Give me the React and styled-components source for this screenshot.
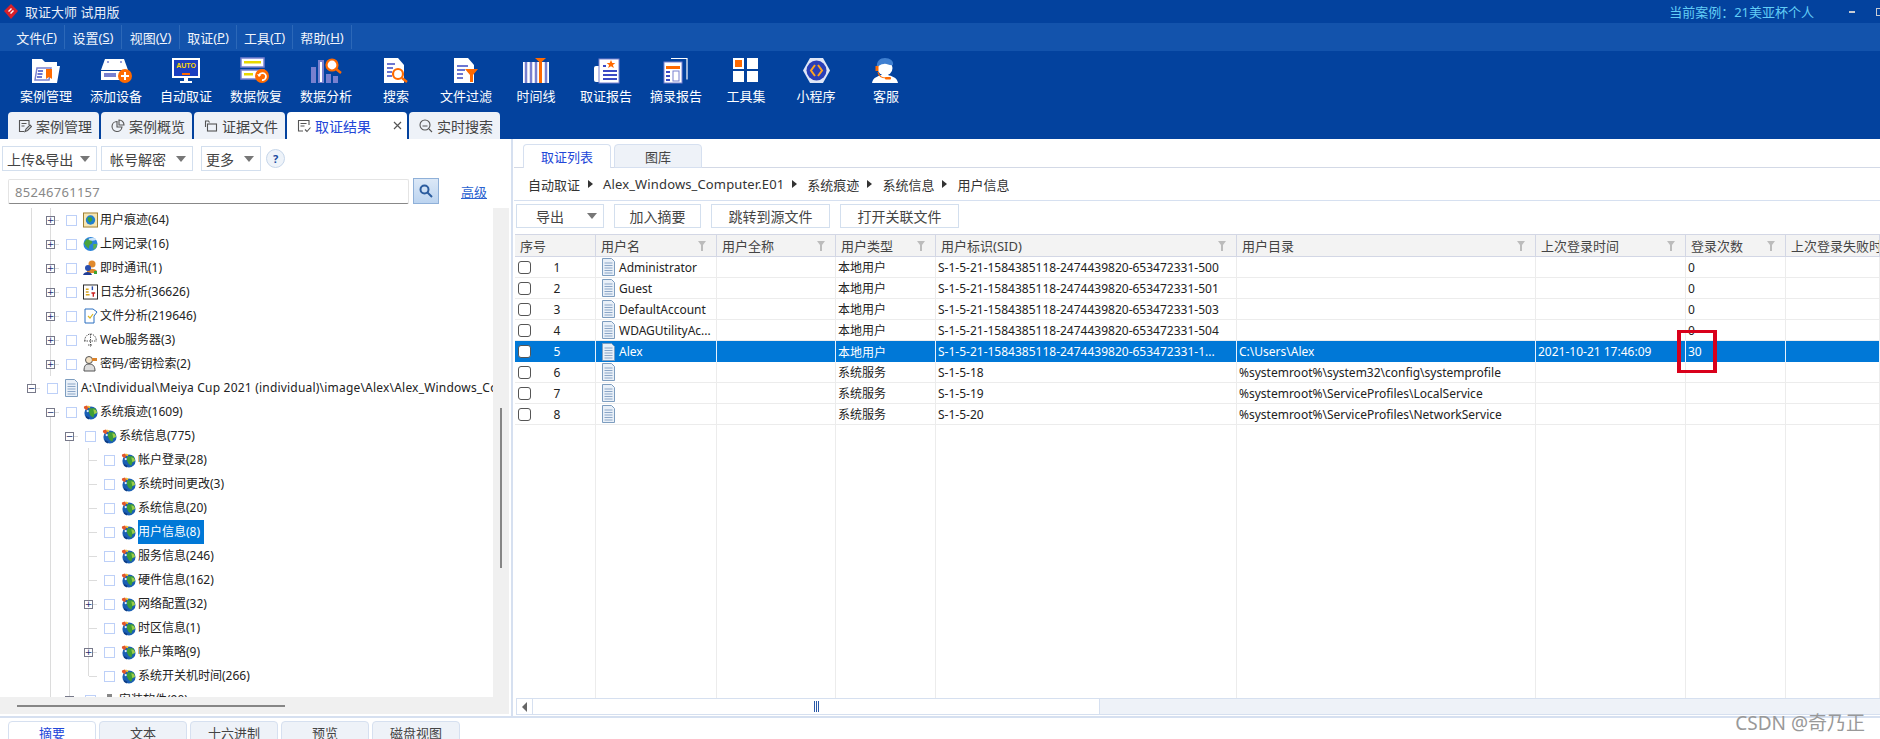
import styled, { createGlobalStyle } from 'styled-components';

const GlobalStyle = createGlobalStyle`
  html, body {
    margin: 0;
    padding: 0;
    background: #fff;
  }
  * {
    box-sizing: border-box;
  }
  body {
    font-family: "Noto Sans", "Noto Sans CJK SC", sans-serif;
    font-size: 12px;
    color: #222;
  }
`;

const COLUMNS = '81px 121px 119px 100px 301px 299px 150px 100px 94px';

const Page = styled.div`
  display: flex;
  flex-direction: column;
  width: 1880px;
  height: 739px;
  overflow: hidden;
  position: relative;
`;

const TitleBar = styled.div`
  display: flex;
  flex: none;
  align-items: center;
  height: 23px;
  background: #03429e;
  padding-left: 4px;
  color: #e8eef8;
  font-size: 13px;
`;

const AppTitle = styled.span`
  margin-left: 7px;
  flex: 1;
`;

const CaseName = styled.span`
  color: #62cdf6;
  font-size: 13px;
  margin-right: 35px;
`;

const WinMin = styled.span`
  width: 6px;
  height: 2px;
  background: #c9ccd3;
  margin-right: 21px;
`;

const WinMax = styled.span`
  width: 6px;
  height: 8px;
  border: 1px solid #c9ccd3;
  margin-right: -2px;
`;

const MenuBar = styled.div`
  display: flex;
  flex: none;
  height: 28px;
  padding-left: 9px;
  background: #1353ac;
`;

const MenuItem = styled.div`
  display: flex;
  align-items: center;
  justify-content: center;
  width: ${(props) => props.$width}px;
  margin: 2px 0;
  border-right: 1px solid #2c68b8;
  color: #f0f4fb;
  font-size: 13px;
`;

const Ribbon = styled.div`
  height: 88px;
  flex: none;
  background: #03429e;
  display: flex;
  flex-direction: column;
`;

const ToolRow = styled.div`
  display: flex;
  height: 61px;
  padding: 5px 0 0 11px;
`;

const ToolItem = styled.div`
  width: 70px;
  display: flex;
  flex-direction: column;
  align-items: center;
  color: #fff;
  font-size: 13px;
  white-space: nowrap;
`;

const ToolIconBox = styled.div`
  height: 28px;
  display: flex;
  align-items: center;
  margin-bottom: 2px;
`;

const TabStrip = styled.div`
  display: flex;
  gap: 2px;
  height: 27px;
  padding-left: 8px;
`;

const TopTab = styled.div`
  display: flex;
  align-items: center;
  width: ${(props) => props.$width}px;
  padding-left: 10px;
  gap: 4px;
  border-radius: 4px 4px 0 0;
  background: ${(props) => (props.$active ? '#fff' : '#eef2f8')};
  color: ${(props) => (props.$active ? '#2246d8' : '#444')};
  font-size: 14px;
  white-space: nowrap;
`;

const TabClose = styled.span`
  margin-left: 18px;
  display: flex;
`;

const Main = styled.div`
  display: flex;
  flex: none;
  height: 577px;
`;

const LeftPanel = styled.div`
  width: 511px;
  display: flex;
  flex-direction: column;
`;

const LeftTools = styled.div`
  display: flex;
  align-items: center;
  height: 37px;
  padding: 7px 0 5px 2px;
`;

const DropButton = styled.div`
  display: flex;
  align-items: center;
  justify-content: space-between;
  width: ${(props) => props.$width}px;
  height: 25px;
  margin-right: ${(props) => props.$gap || 4}px;
  padding: 0 ${(props) => props.$pad || 6}px 0 ${(props) => props.$padLeft || 4}px;
  border: 1px solid #d3dfee;
  color: #444;
  font-size: 14px;
  white-space: nowrap;
`;

const Caret = styled.span`
  width: 0;
  height: 0;
  border-left: 5px solid transparent;
  border-right: 5px solid transparent;
  border-top: 6px solid #777;
`;

const HelpButton = styled.div`
  width: 19px;
  height: 19px;
  margin-left: 1px;
  border: 1px solid #c6d6ea;
  border-radius: 50%;
  background: #eef3f9;
  color: #1b4aa0;
  font-size: 11px;
  font-weight: 700;
  display: flex;
  align-items: center;
  justify-content: center;
`;

const SearchRow = styled.div`
  display: flex;
  align-items: flex-start;
  height: 32px;
  padding: 2px 0 0 8px;
`;

const SearchInput = styled.div`
  width: 401px;
  height: 25px;
  margin-top: 1px;
  padding-left: 6px;
  display: flex;
  align-items: center;
  border: 1px solid #e4e4e4;
  border-bottom: 1px solid #888;
  border-radius: 2px;
  color: #888;
  font-size: 13px;
  letter-spacing: 0.3px;
`;

const SearchButton = styled.div`
  width: 26px;
  height: 26px;
  margin-left: 4px;
  border: 1px solid #8fb0d8;
  background: linear-gradient(#dbe8f7, #bcd4f0);
  display: flex;
  align-items: center;
  justify-content: center;
`;

const AdvancedLink = styled.a`
  margin: 4px 0 0 22px;
  color: #2a62d0;
  font-size: 13px;
  text-decoration: underline;
`;

const TreeArea = styled.div`
  display: flex;
  height: 489px;
`;

const TreeView = styled.div`
  width: 493px;
  overflow: hidden;
`;

const VGutter = styled.div`
  width: 16px;
  background: #f0f0f0;
  padding: 200px 0 0 7px;
`;

const VThumb = styled.div`
  width: 2px;
  height: 160px;
  background: #868686;
`;

const HGutter = styled.div`
  width: 509px;
  height: 17px;
  background: #f0f0f0;
  padding: 8px 0 0 17px;
`;

const HThumb = styled.div`
  width: 268px;
  height: 2px;
  background: #868686;
`;

const TreeRow = styled.div`
  display: flex;
  align-items: center;
  height: 24px;
  padding-left: 22px;
  white-space: nowrap;
`;

const lineColor = '#dcdcdc';
const lineLayers = ({ $line, $tick }) => {
  const layers = [];
  const g = `linear-gradient(${lineColor}, ${lineColor})`;
  if ($line === 'full') layers.push(`${g} 9px 0 / 1px 100% no-repeat`);
  if ($line === 'up') layers.push(`${g} 9px 0 / 1px 50% no-repeat`);
  if ($line === 'down') layers.push(`${g} 9px 12px / 1px 50% no-repeat`);
  if ($tick) layers.push(`${g} 10px 12px / 8px 1px no-repeat`);
  return layers.length ? layers.join(', ') : 'none';
};

const TreeCell = styled.div`
  width: 19px;
  height: 24px;
  flex: none;
  display: flex;
  align-items: center;
  padding-left: 5px;
  background: ${lineLayers};
`;

const Expander = styled.div`
  width: 9px;
  height: 9px;
  border: 1px solid #77798a;
  background: #fff;
  display: flex;
  align-items: center;
  justify-content: center;
  color: #1d2f70;
  font-size: 9px;
  line-height: 1;
  font-family: "DejaVu Sans", sans-serif;
  margin-top: 1px;
`;

const TreeCheck = styled.span`
  width: 11px;
  height: 11px;
  flex: none;
  margin: 0 6px;
  border: 1px solid #bdd0f8;
`;

const TreeIcon = styled.span`
  width: 15px;
  height: 18px;
  flex: none;
  display: flex;
  align-items: center;
  justify-content: center;
  margin-right: 2px;
`;

const TreeLabel = styled.span`
  height: 24px;
  line-height: 23px;
  font-size: 12px;
  padding-right: 4px;
  letter-spacing: ${(props) => (props.$wide ? '0.2px' : '0')};
  ${(props) => props.$selected && 'background: #0078d7; color: #fff;'}
`;

const Splitter = styled.div`
  width: 2px;
  margin-right: 1px;
  background: #d6e0f0;
`;

const RightPanel = styled.div`
  flex: 1;
  min-width: 0;
  display: flex;
  flex-direction: column;
`;

const SubTabs = styled.div`
  display: flex;
  gap: 3px;
  height: 29px;
  padding: 5px 0 0 9px;
  border-bottom: 1px solid #d3d9e6;
`;

const SubTab = styled.div`
  width: 88px;
  height: 24px;
  display: flex;
  align-items: center;
  justify-content: center;
  font-size: 13px;
  border: 1px solid #d6e0f0;
  border-radius: 4px 4px 0 0;
  ${(props) => (props.$active
    ? 'border-bottom: none; background: #fff; color: #2246d8;'
    : 'background: #eef2f8; color: #444;')}
`;

const Breadcrumb = styled.div`
  display: flex;
  align-items: center;
  gap: 8px;
  height: 33px;
  padding-left: 14px;
  border-bottom: 1px solid #d6e0f0;
  font-size: 13px;
  color: #333;
`;

const CrumbFile = styled.span`
  letter-spacing: 0.14px;
`;

const CrumbArrow = styled.span`
  width: 0;
  height: 0;
  border-top: 4px solid transparent;
  border-bottom: 4px solid transparent;
  border-left: 5px solid #333;
  margin-right: 2px;
`;

const Actions = styled.div`
  display: flex;
  height: 33px;
  padding: 3px 0 0 2px;
  gap: 10px;
`;

const ActionButton = styled.div`
  display: flex;
  align-items: center;
  justify-content: center;
  width: ${(props) => props.$width}px;
  height: 24px;
  border: 1px solid #d3dfee;
  color: #444;
  font-size: 14px;
  white-space: nowrap;
`;

const ExportButton = styled(ActionButton)`
  justify-content: space-between;
  padding: 0 6px 0 19px;
`;

const Table = styled.div`
  position: relative;
  height: 464px;
  margin-left: 1px;
  display: flex;
  flex-direction: column;
  overflow: hidden;
`;

const HeaderRow = styled.div`
  display: grid;
  grid-template-columns: ${COLUMNS};
  height: 23px;
  flex: none;
  background: #f3f3f3;
  border-top: 1px solid #d3d7e5;
  border-bottom: 1px solid #d3d7e5;
`;

const HeaderCell = styled.div`
  display: flex;
  align-items: center;
  justify-content: space-between;
  padding: 0 10px 0 5px;
  border-right: 1px solid #d3d7e5;
  color: #444;
  font-size: 13px;
  white-space: nowrap;
  overflow: hidden;
`;

const Row = styled.div`
  display: grid;
  grid-template-columns: ${COLUMNS};
  height: 21px;
  flex: none;
  border-bottom: ${(props) => (props.$selected ? 'none' : '1px solid #ececec')};
  background: ${(props) => (props.$selected ? '#0078d7' : '#fff')};
  color: ${(props) => (props.$selected ? '#fff' : '#222')};
`;

const Filler = styled.div`
  display: grid;
  grid-template-columns: ${COLUMNS};
  flex: 1;
`;

const Cell = styled.div`
  display: flex;
  align-items: center;
  padding-left: 2px;
  border-right: 1px solid ${(props) => (props.$selected ? '#e6f1fb' : '#ececec')};
  font-size: 12px;
  white-space: nowrap;
  overflow: hidden;
`;

const EmptyCell = styled.div`
  border-right: 1px solid #ececec;
`;

const RowCheck = styled.span`
  width: 13px;
  height: 13px;
  flex: none;
  margin-left: 1px;
  border: 1px solid #555;
  border-radius: 3px;
  background: #fff;
`;

const RowNumber = styled.span`
  width: 52px;
  text-align: center;
`;

const NameCell = styled(Cell)`
  padding-left: 6px;
  gap: 4px;
`;

const Highlight = styled.div`
  position: absolute;
  left: 1162px;
  top: 96px;
  width: 40px;
  height: 43px;
  border: 3px solid #d9001b;
  border-left-width: 4px;
  border-right-width: 4px;
`;

const HScroll = styled.div`
  display: flex;
  height: 17px;
  margin-left: 2px;
  border-top: 1px solid #d6e0f0;
  border-bottom: 1px solid #d6e0f0;
`;

const ScrollLeft = styled.div`
  width: 17px;
  border-left: 1px solid #d6e0f0;
  border-right: 1px solid #d6e0f0;
  display: flex;
  align-items: center;
  padding-left: 5px;
`;

const ScrollThumb = styled.div`
  width: 567px;
  border-right: 1px solid #d6e0f0;
  display: flex;
  align-items: center;
  justify-content: center;
  gap: 1px;
`;

const Grip = styled.span`
  width: 1px;
  height: 11px;
  background: #2a5aa8;
`;

const ScrollTrack = styled.div`
  flex: 1;
  background: #eef2f8;
`;

const BottomBar = styled.div`
  flex: none;
  height: 23px;
  overflow: hidden;
  border-top: 2px solid #d6e0f0;
  display: flex;
  gap: 3px;
  padding: 3px 0 0 8px;
`;

const BottomTab = styled.div`
  width: 88px;
  height: 22px;
  display: flex;
  justify-content: center;
  padding-top: 1px;
  border: 1px solid #d6e0f0;
  border-radius: 4px 4px 0 0;
  font-size: 13px;
  background: ${(props) => (props.$active ? '#fff' : '#eef2f8')};
  color: ${(props) => (props.$active ? '#2246d8' : '#444')};
`;

const Watermark = styled.div`
  position: absolute;
  right: 15px;
  bottom: 5px;
  color: #999;
  font-size: 19px;
  line-height: 1.1;
`;

/* ribbon icons */
const BLUE = '#7880cf';
const ORANGE = '#ff6a00';

const Svg = ({ w = 32, h = 27, children }) => (
  <svg width={w} height={h} viewBox={`0 0 ${w} ${h}`}>{children}</svg>
);

const IconCase = () => (
  <Svg>
    <path d="M2 2h10l3 3h12v4h3l-3 17H2z" fill="#fff" />
    <path d="M7 11h14l-2 12H5z" fill="#fff" stroke={BLUE} strokeWidth="1.5" />
    <path d="M8 14h5M7.500 17h5M7 20h5" stroke="#3b49c4" strokeWidth="1.6" />
    <path d="M16 12h6v10l-3-2-3 2z" fill={ORANGE} />
  </Svg>
);

const IconDevice = () => (
  <Svg>
    <path d="M5 2h19l4 11H1z" fill="#fff" />
    <circle cx="8" cy="5" r="1" fill={BLUE} />
    <circle cx="21" cy="5" r="1" fill={BLUE} />
    <rect x="1" y="14" width="25" height="9" fill="#fff" />
    <rect x="4" y="16" width="12" height="4" fill={BLUE} />
    <circle cx="25" cy="19" r="7" fill={ORANGE} />
    <path d="M21 19h8M25 15v8" stroke="#fff" strokeWidth="2" />
  </Svg>
);

const IconAuto = () => (
  <Svg w={30}>
    <rect x="1" y="1" width="28" height="20" fill="#fff" />
    <rect x="3" y="3" width="24" height="16" fill="#1b3fc0" />
    <text x="15" y="11" textAnchor="middle" fontSize="7" fontWeight="700" fill="#ffd800" fontFamily="Liberation Sans">AUTO</text>
    <rect x="11" y="16" width="8" height="2" fill={ORANGE} />
    <path d="M13 21h4v3h4v2H9v-2h4z" fill="#fff" />
  </Svg>
);

const IconRestore = () => (
  <Svg>
    <rect x="1" y="1" width="23" height="9" fill="#fff" stroke={BLUE} strokeWidth="1.5" />
    <rect x="4" y="4" width="17" height="2.5" fill="#e8d800" />
    <rect x="1" y="13" width="23" height="9" fill="#fff" stroke={BLUE} strokeWidth="1.5" />
    <rect x="4" y="16" width="9" height="2.5" fill="#e8d800" />
    <circle cx="22" cy="19" r="7" fill={ORANGE} />
    <path d="M19 19a3.500 3.500 0 1 1 3 4" fill="none" stroke="#fff" strokeWidth="1.8" />
    <path d="M17 17l2 3 2-2z" fill="#fff" />
  </Svg>
);

const IconAnalyse = () => (
  <Svg>
    <rect x="1" y="10" width="5" height="16" fill={BLUE} />
    <rect x="8" y="3" width="6" height="23" fill={BLUE} />
    <rect x="10" y="5" width="2" height="20" fill="#fff" />
    <rect x="16" y="17" width="5" height="9" fill={BLUE} />
    <rect x="23" y="19" width="5" height="7" fill={BLUE} />
    <circle cx="22" cy="8" r="5.500" fill="#fff" stroke={ORANGE} strokeWidth="2.2" />
    <path d="M26 12l5 4" stroke={ORANGE} strokeWidth="2.4" />
  </Svg>
);

const IconSearchDoc = () => (
  <Svg w={26}>
    <path d="M1 1h14l6 7v18H1z" fill="#fff" />
    <path d="M4 7h8M4 11h6M4 15h5M4 19h5" stroke="#3b49c4" strokeWidth="1.6" />
    <circle cx="15" cy="17" r="5" fill="#fff" stroke={ORANGE} strokeWidth="2.2" />
    <path d="M19 21l5 4" stroke={ORANGE} strokeWidth="2.4" />
  </Svg>
);

const IconFilterDoc = () => (
  <Svg w={26}>
    <path d="M1 1h14l6 7v18H1z" fill="#fff" />
    <path d="M4 9h11M4 13h8M4 17h6M4 21h6" stroke="#3b49c4" strokeWidth="1.6" />
    <path d="M12 12h13l-5 6v7h-3v-7z" fill={ORANGE} />
  </Svg>
);

const IconTimeline = () => (
  <Svg w={28}>
    <rect x="1" y="5" width="26" height="21" fill="#fff" />
    <path d="M4 5v21M9 5v21M14 5v21M24 5v21" stroke={BLUE} strokeWidth="2.5" />
    <rect x="17" y="5" width="3" height="21" fill={ORANGE} />
    <path d="M13 1h11l-5.500 5z" fill={ORANGE} />
  </Svg>
);

const IconReport = () => (
  <Svg w={27}>
    <rect x="1" y="9" width="8" height="16" rx="2" fill="#fff" />
    <rect x="6" y="2" width="20" height="24" fill="#fff" stroke={BLUE} />
    <path d="M18 3l1.300 3h3l-2.400 2 1 3-2.900-1.800-2.900 1.800 1-3-2.400-2h3z" fill={ORANGE} />
    <path d="M10 9h3M10 14h14M10 18h14M10 22h14" stroke="#3b49c4" strokeWidth="1.8" />
  </Svg>
);

const IconExcerpt = () => (
  <Svg w={27}>
    <path d="M8 1.500h16v21" fill="none" stroke="#fff" strokeWidth="1.200" />
    <rect x="1" y="5" width="18" height="21" fill="#fff" stroke={BLUE} />
    <rect x="3" y="9" width="14" height="3" fill={ORANGE} />
    <path d="M3 15h4M3 19h4M3 23h4" stroke="#3b49c4" strokeWidth="1.800" />
    <rect x="10" y="14" width="6" height="10" fill="#fff" stroke={BLUE} />
  </Svg>
);

const IconTools = () => (
  <Svg w={28} h={26}>
    <rect x="1" y="1" width="11" height="11" fill="#fff" />
    <rect x="3" y="3" width="7" height="7" fill={ORANGE} />
    <rect x="15" y="1" width="11" height="11" fill="#fff" />
    <rect x="1" y="14" width="11" height="11" fill="#fff" />
    <rect x="15" y="14" width="11" height="11" fill="#fff" />
  </Svg>
);

const IconApplet = () => (
  <Svg w={29}>
    <path d="M8 1h13l7 12.500-7 12.500H8L1 13.500z" fill="#dfe6f7" />
    <circle cx="14.500" cy="13.500" r="10" fill="#2a3fb8" />
    <path d="M13 8l-4 5.500 4 5.500M16 8l4 5.500-4 5.500" fill="none" stroke="#ffa51e" strokeWidth="2" />
  </Svg>
);

const IconService = () => (
  <Svg>
    <path d="M2 26c1-6 7-7 9-8h7c3 1 9 2 10 8z" fill="#fff" />
    <circle cx="15" cy="11" r="7.500" fill="#fff" />
    <path d="M7 11c-1-7 3-10 8-10s9 3 8 7c-3 1-7-2-9-1-3 0-6 2-7 4z" fill="#3f7fd0" />
    <path d="M7 9v5" stroke={ORANGE} strokeWidth="3" />
    <path d="M8 15c1 5 4 6 8 6" fill="none" stroke={ORANGE} strokeWidth="1.200" />
    <rect x="15" y="20" width="6" height="2.500" rx="1" fill={ORANGE} />
  </Svg>
);

/* small line icons for the tabs */
const TabSvg = ({ children }) => (
  <svg width="14" height="14" viewBox="0 0 14 14" fill="none" stroke="#555" strokeWidth="1.100">{children}</svg>
);

const TabCase = () => (
  <TabSvg>
    <path d="M11 6V1.500H1.500v11H6M3.500 4.500h5M3.500 7h3" />
    <path d="M7 12.500l1-2.500 4-4 1.500 1.500-4 4z" />
  </TabSvg>
);

const TabPie = () => (
  <TabSvg>
    <path d="M6 2.500a5 5 0 1 0 5 5.500H6z" />
    <path d="M8 1a5 5 0 0 1 5 5H8z" />
  </TabSvg>
);

const TabFiles = () => (
  <TabSvg>
    <path d="M1.500 8V2h3l1 1.500" />
    <rect x="3.500" y="5" width="9" height="7" />
  </TabSvg>
);

const TabResult = () => (
  <TabSvg>
    <path d="M12 6V1.500H1.500v10.500H6M3.500 4.500h6M3.500 7h4" />
    <path d="M8 10.500l2 2 3.500-4" />
  </TabSvg>
);

const TabSearch = () => (
  <TabSvg>
    <circle cx="6" cy="6" r="5" />
    <path d="M10 10l3 3M3.500 7h5" />
  </TabSvg>
);

const CloseGlyph = () => (
  <svg width="9" height="9" viewBox="0 0 9 9" stroke="#555" strokeWidth="1.200"><path d="M1 1l7 7M8 1l-7 7" /></svg>
);

const MagnifierGlyph = () => (
  <svg width="14" height="14" viewBox="0 0 14 14" fill="none" stroke="#2b5c9e" strokeWidth="2">
    <circle cx="5.500" cy="5.500" r="4" />
    <path d="M8.500 8.500l4.500 4.500" />
  </svg>
);

const Funnel = () => (
  <svg width="8" height="10" viewBox="0 0 8 10" fill="#bcbcbc"><path d="M0 0h8L5 4v6H3V4z" /></svg>
);

const ArrowLeft = () => (
  <svg width="5" height="10" viewBox="0 0 5 10" fill="#666"><path d="M5 0v10L0 5z" /></svg>
);

const DocIcon = () => (
  <svg width="13" height="18" viewBox="0 0 13 18">
    <path d="M.5.500h9l3 3v14H.5z" fill="#e9f0f8" stroke="#7d9dbf" />
    <path d="M2.500 5h8M2.500 7.500h8M2.500 10h8M2.500 12.500h8M2.500 15h8" stroke="#8ba6c7" />
  </svg>
);

/* tree icons */
const GlobeIcon = () => (
  <svg width="15" height="16" viewBox="0 0 16 16">
    <circle cx="8.500" cy="9" r="7" fill="#1a5fb4" />
    <path d="M7 4l6 0 2 4-3 3-1 3-3-2-2-4z" fill="#3f9e35" />
    <path d="M11 5l3 1 1 3-3 1z" fill="#9ccc4a" />
    <path d="M3 12l4 2-1 2-3-2z" fill="#0e3d85" />
    <path d="M1 2l3-1 2 2-2 3-3-2z" fill="#e2572a" />
    <path d="M5 1l3 1-1 2-2-1z" fill="#f4c430" />
    <circle cx="5" cy="7" r="1.200" fill="#dff0ff" />
  </svg>
);

const WebIcon = () => (
  <svg width="16" height="16" viewBox="0 0 16 16">
    <circle cx="8" cy="8" r="7.500" fill="#2b83d8" />
    <path d="M4 3l5 1 1 3-3 2-1 4-3-3-2-3z" fill="#4aa33d" />
    <path d="M11 8l4 0-1 4-3 2z" fill="#5fb24a" />
    <ellipse cx="10" cy="3" rx="4" ry="1.500" fill="#cfe6fb" />
  </svg>
);

const TraceIcon = () => (
  <svg width="16" height="16" viewBox="0 0 16 16">
    <rect x=".5" y=".5" width="15" height="15" fill="#f6e6b4" stroke="#9a7a2a" />
    <circle cx="8" cy="8" r="5" fill="#1f7fd0" />
    <path d="M5 5l4 0 1 3-3 3-2-3z" fill="#3fa535" />
  </svg>
);

const ChatIcon = () => (
  <svg width="15" height="16" viewBox="0 0 15 16">
    <circle cx="9" cy="4" r="3.500" fill="#e08a2e" />
    <path d="M4 11c1-3 8-3 10 0v2H4z" fill="#e08a2e" />
    <circle cx="5" cy="8" r="3" fill="#2a4fb0" />
    <path d="M0 15c1-4 8-4 9 0z" fill="#1f3d96" />
    <rect x="11" y="11" width="3" height="3" fill="#3fa535" />
  </svg>
);

const LogIcon = () => (
  <svg width="16" height="16" viewBox="0 0 16 16">
    <rect x=".5" y=".5" width="15" height="15" fill="#fff" stroke="#222" />
    <path d="M3 5h3M3 8h3M3 11h4" stroke="#d9a520" strokeWidth="1.500" />
    <path d="M10 2v4" stroke="#2a4fb0" strokeWidth="1.500" />
    <path d="M9 9h4M11 9v4" stroke="#c22" strokeWidth="1.500" />
  </svg>
);

const FileAnalysisIcon = () => (
  <svg width="14" height="16" viewBox="0 0 14 16">
    <path d="M1 1h8l4 3-3 4v7H1z" fill="#fff" stroke="#2a6fc0" />
    <path d="M4 8l2 2 3-4" fill="none" stroke="#d9b520" strokeWidth="1.200" />
  </svg>
);

const WebServerIcon = () => (
  <svg width="15" height="16" viewBox="0 0 15 16" fill="none" stroke="#555" strokeDasharray="1.500 1">
    <path d="M2 9c-1-3 2-7 5.500-7s6.500 4 5.500 7" />
    <path d="M1 9h13M7.500 2v13M5 13h5" />
  </svg>
);

const KeyIcon = () => (
  <svg width="15" height="16" viewBox="0 0 15 16">
    <circle cx="6" cy="4" r="3.500" fill="#f3e3c8" stroke="#555" />
    <path d="M1 15c0-6 2-7 5-7s6 1 6 7z" fill="#ddd" stroke="#555" />
    <rect x="9" y="2" width="5" height="3" fill="#d9822b" />
  </svg>
);

const SoftwareIcon = () => (
  <svg width="15" height="16" viewBox="0 0 15 16"><path d="M5 2h5v4h4v7H1V6h4z" fill="#888" /></svg>
);

const icons = {
  globe: GlobeIcon,
  web: WebIcon,
  trace: TraceIcon,
  chat: ChatIcon,
  log: LogIcon,
  file: FileAnalysisIcon,
  server: WebServerIcon,
  key: KeyIcon,
  doc: DocIcon,
  soft: SoftwareIcon,
};

const menus = [
  ['文件', 'F', 56], ['设置', 'S', 57], ['视图', 'V', 58],
  ['取证', 'P', 57], ['工具', 'T', 56], ['帮助', 'H', 59],
];

const tools = [
  ['案例管理', IconCase], ['添加设备', IconDevice], ['自动取证', IconAuto],
  ['数据恢复', IconRestore], ['数据分析', IconAnalyse], ['搜索', IconSearchDoc],
  ['文件过滤', IconFilterDoc], ['时间线', IconTimeline], ['取证报告', IconReport],
  ['摘录报告', IconExcerpt], ['工具集', IconTools], ['小程序', IconApplet], ['客服', IconService],
];

const L2 = [false, true];
const L3 = [false, true, true];

const tree = [
  { label: '用户痕迹(64)', icon: 'trace', guides: [true], kind: 'plus' },
  { label: '上网记录(16)', icon: 'web', guides: [true], kind: 'plus' },
  { label: '即时通讯(1)', icon: 'chat', guides: [true], kind: 'plus' },
  { label: '日志分析(36626)', icon: 'log', guides: [true], kind: 'plus' },
  { label: '文件分析(219646)', icon: 'file', guides: [true], kind: 'plus' },
  { label: 'Web服务器(3)', icon: 'server', guides: [true], kind: 'plus' },
  { label: '密码/密钥检索(2)', icon: 'key', guides: [true], kind: 'plus' },
  { label: 'A:\\Individual\\Meiya Cup 2021 (individual)\\image\\Alex\\Alex_Windows_Computer.E01', icon: 'doc', guides: [], kind: 'minus', line: 'up', wide: true },
  { label: '系统痕迹(1609)', icon: 'globe', guides: [false], kind: 'minus', line: 'down' },
  { label: '系统信息(775)', icon: 'globe', guides: L2, kind: 'minus', line: 'down' },
  { label: '帐户登录(28)', icon: 'globe', guides: L3, kind: 'leaf' },
  { label: '系统时间更改(3)', icon: 'globe', guides: L3, kind: 'leaf' },
  { label: '系统信息(20)', icon: 'globe', guides: L3, kind: 'leaf' },
  { label: '用户信息(8)', icon: 'globe', guides: L3, kind: 'leaf', selected: true },
  { label: '服务信息(246)', icon: 'globe', guides: L3, kind: 'leaf' },
  { label: '硬件信息(162)', icon: 'globe', guides: L3, kind: 'leaf' },
  { label: '网络配置(32)', icon: 'globe', guides: L3, kind: 'plus' },
  { label: '时区信息(1)', icon: 'globe', guides: L3, kind: 'leaf' },
  { label: '帐户策略(9)', icon: 'globe', guides: L3, kind: 'plus' },
  { label: '系统开关机时间(266)', icon: 'globe', guides: L3, kind: 'leaf', line: 'up' },
  { label: '安装软件(90)', icon: 'soft', guides: L2, kind: 'minus', line: 'full' },
];

const columns = ['序号', '用户名', '用户全称', '用户类型', '用户标识(SID)', '用户目录', '上次登录时间', '登录次数', '上次登录失败时间'];

const SID = 'S-1-5-21-1584385118-2474439820-653472331-';

const users = [
  { name: 'Administrator', type: '本地用户', sid: `${SID}500`, count: '0' },
  { name: 'Guest', type: '本地用户', sid: `${SID}501`, count: '0' },
  { name: 'DefaultAccount', type: '本地用户', sid: `${SID}503`, count: '0' },
  { name: 'WDAGUtilityAc...', type: '本地用户', sid: `${SID}504`, count: '0' },
  { name: 'Alex', type: '本地用户', sid: `${SID}1...`, dir: 'C:\\Users\\Alex', time: '2021-10-21 17:46:09', count: '30', selected: true },
  { name: '', type: '系统服务', sid: 'S-1-5-18', dir: '%systemroot%\\system32\\config\\systemprofile' },
  { name: '', type: '系统服务', sid: 'S-1-5-19', dir: '%systemroot%\\ServiceProfiles\\LocalService' },
  { name: '', type: '系统服务', sid: 'S-1-5-20', dir: '%systemroot%\\ServiceProfiles\\NetworkService' },
];

function TreeNode({ node }) {
  const Icon = icons[node.icon];
  const isBranch = node.kind !== 'leaf';
  return (
    <TreeRow>
      {node.guides.map((on, index) => (
        // eslint-disable-next-line react/no-array-index-key
        <TreeCell key={index} $line={on ? 'full' : 'none'} />
      ))}
      <TreeCell $line={node.line || 'full'} $tick>
        {isBranch && <Expander>{node.kind === 'plus' ? '+' : '−'}</Expander>}
      </TreeCell>
      <TreeCheck />
      <TreeIcon><Icon /></TreeIcon>
      <TreeLabel $selected={node.selected} $wide={node.wide}>{node.label}</TreeLabel>
    </TreeRow>
  );
}

export default function App() {
  return (
    <Page>
      <GlobalStyle />
      <TitleBar>
        <svg width="14" height="15" viewBox="0 0 14 15">
          <path d="M7 0l7 7-7 8-7-8z" fill="#d8202a" />
          <path d="M4 7l3-3 1 1-3 3zM6 9l3-3 1 1-3 3z" fill="#fff" />
        </svg>
        <AppTitle>取证大师 试用版</AppTitle>
        <CaseName>当前案例：21美亚杯个人</CaseName>
        <WinMin />
        <WinMax />
      </TitleBar>
      <MenuBar>
        {menus.map(([label, key, width]) => (
          <MenuItem key={key} $width={width}>
            {label}(<u>{key}</u>)
          </MenuItem>
        ))}
      </MenuBar>
      <Ribbon>
        <ToolRow>
          {tools.map(([label, Icon]) => (
            <ToolItem key={label}>
              <ToolIconBox><Icon /></ToolIconBox>
              {label}
            </ToolItem>
          ))}
        </ToolRow>
        <TabStrip>
          <TopTab $width={91}><TabCase />案例管理</TopTab>
          <TopTab $width={91}><TabPie />案例概览</TopTab>
          <TopTab $width={91}><TabFiles />证据文件</TopTab>
          <TopTab $width={120} $active>
            <TabResult />取证结果
            <TabClose><CloseGlyph /></TabClose>
          </TopTab>
          <TopTab $width={91}><TabSearch />实时搜索</TopTab>
        </TabStrip>
      </Ribbon>
      <Main>
        <LeftPanel>
          <LeftTools>
            <DropButton $width={95}>上传&导出<Caret /></DropButton>
            <DropButton $width={92} $gap={8} $padLeft={8}>帐号解密<Caret /></DropButton>
            <DropButton $width={60}>更多<Caret /></DropButton>
            <HelpButton>?</HelpButton>
          </LeftTools>
          <SearchRow>
            <SearchInput>85246761157</SearchInput>
            <SearchButton><MagnifierGlyph /></SearchButton>
            <AdvancedLink>高级</AdvancedLink>
          </SearchRow>
          <TreeArea>
            <TreeView>
              {tree.map((node) => <TreeNode key={node.label} node={node} />)}
            </TreeView>
            <VGutter><VThumb /></VGutter>
          </TreeArea>
          <HGutter><HThumb /></HGutter>
        </LeftPanel>
        <Splitter />
        <RightPanel>
          <SubTabs>
            <SubTab $active>取证列表</SubTab>
            <SubTab>图库</SubTab>
          </SubTabs>
          <Breadcrumb>
            自动取证
            <CrumbArrow />
            <CrumbFile>Alex_Windows_Computer.E01</CrumbFile>
            <CrumbArrow />
            系统痕迹
            <CrumbArrow />
            系统信息
            <CrumbArrow />
            用户信息
          </Breadcrumb>
          <Actions>
            <ExportButton $width={88}>导出<Caret /></ExportButton>
            <ActionButton $width={87}>加入摘要</ActionButton>
            <ActionButton $width={119}>跳转到源文件</ActionButton>
            <ActionButton $width={119}>打开关联文件</ActionButton>
          </Actions>
          <Table>
            <HeaderRow>
              {columns.map((title, index) => (
                <HeaderCell key={title}>
                  {title}
                  {index > 0 && index < 8 && <Funnel />}
                </HeaderCell>
              ))}
            </HeaderRow>
            {users.map((user, index) => (
              <Row key={user.sid} $selected={user.selected}>
                <Cell $selected={user.selected}>
                  <RowCheck />
                  <RowNumber>{index + 1}</RowNumber>
                </Cell>
                <NameCell $selected={user.selected}><DocIcon />{user.name}</NameCell>
                <Cell $selected={user.selected} />
                <Cell $selected={user.selected}>{user.type}</Cell>
                <Cell $selected={user.selected}>{user.sid}</Cell>
                <Cell $selected={user.selected}>{user.dir}</Cell>
                <Cell $selected={user.selected}>{user.time}</Cell>
                <Cell $selected={user.selected}>{user.count}</Cell>
                <Cell $selected={user.selected} />
              </Row>
            ))}
            <Filler>
              {columns.map((title) => <EmptyCell key={title} />)}
            </Filler>
            <Highlight />
          </Table>
          <HScroll>
            <ScrollLeft><ArrowLeft /></ScrollLeft>
            <ScrollThumb><Grip /><Grip /><Grip /></ScrollThumb>
            <ScrollTrack />
          </HScroll>
        </RightPanel>
      </Main>
      <BottomBar>
        <BottomTab $active>摘要</BottomTab>
        <BottomTab>文本</BottomTab>
        <BottomTab>十六进制</BottomTab>
        <BottomTab>预览</BottomTab>
        <BottomTab>磁盘视图</BottomTab>
      </BottomBar>
      <Watermark>CSDN @奇乃正</Watermark>
    </Page>
  );
}
